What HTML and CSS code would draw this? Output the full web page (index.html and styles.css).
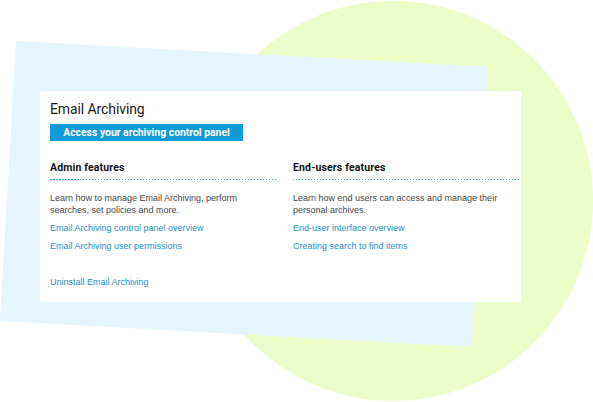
FILE: index.html
```html
<!DOCTYPE html>
<html lang="en">
<head>
<meta charset="utf-8">
<title>Email Archiving</title>
<link rel="stylesheet" href="styles.css">
</head>
<body>
<div class="stage">
  <svg class="backdrop" width="593" height="402" viewBox="0 0 593 402" aria-hidden="true">
    <circle cx="393" cy="201" r="200" fill="#ecfdc9"/>
    <polygon points="16,41 488,67 472,347 0,321" fill="#e6f5fe"/>
  </svg>
  <div class="card">
    <h1 class="title">Email Archiving</h1>
    <a class="cta" href="#">Access your archiving control panel</a>
    <div class="columns">
      <section class="col">
        <h2 class="col-head">Admin features</h2>
        <div class="dots"></div>
        <p class="desc">Learn how to manage Email Archiving, perform searches, set policies and more.</p>
        <a class="link" href="#">Email Archiving control panel overview</a>
        <a class="link" href="#">Email Archiving user permissions</a>
        <a class="link link-far" href="#">Uninstall Email Archiving</a>
      </section>
      <section class="col">
        <h2 class="col-head">End-users features</h2>
        <div class="dots"></div>
        <p class="desc">Learn how end users can access and manage their personal archives.</p>
        <a class="link" href="#">End-user interface overview</a>
        <a class="link" href="#">Creating search to find items</a>
      </section>
    </div>
  </div>
</div>
</body>
</html>
```
FILE: styles.css
```css
html, body {
  margin: 0;
  padding: 0;
  background: #ffffff;
}
.stage {
  position: relative;
  width: 593px;
  height: 402px;
  overflow: hidden;
  padding-top: 91px;
  padding-left: 40px;
  box-sizing: border-box;
}
.backdrop {
  position: absolute;
  left: 0;
  top: 0;
}
.card {
  position: relative;
  width: 481px;
  height: 211px;
  box-sizing: border-box;
  background: #ffffff;
  padding: 10px 0 0 10px;
}
.title {
  margin: 0;
  font-family: Roboto, "Liberation Sans", sans-serif;
  font-weight: 400;
  font-size: 14px;
  line-height: 16px;
  letter-spacing: -0.1px;
  color: #1a1a1a;
}
.cta {
  display: block;
  margin-top: 7px;
  width: 193px;
  height: 17px;
  background: #0e9bd9;
  color: #ffffff;
  text-decoration: none;
  text-align: center;
  font-family: Roboto, "Liberation Sans", sans-serif;
  font-weight: 700;
  font-size: 10.4px;
  line-height: 17px;
}
.columns {
  display: grid;
  grid-template-columns: 228px 228px;
  column-gap: 15px;
  margin-top: 20.5px;
}
.col {
  display: flex;
  flex-direction: column;
  align-items: flex-start;
}
.col-head {
  margin: 0;
  font-family: Roboto, "Liberation Sans", sans-serif;
  font-weight: 700;
  font-size: 10.5px;
  line-height: 12px;
  letter-spacing: 0.15px;
  color: #111111;
}
.dots {
  align-self: stretch;
  height: 1px;
  margin-top: 5.5px;
  background-image: repeating-linear-gradient(to right, #2ea3d6 0 1.5px, transparent 1.5px 3px);
}
.desc {
  margin: 11.5px 0 0;
  font-family: "Liberation Sans", Arial, sans-serif;
  font-size: 9px;
  line-height: 12.3px;
  color: #484848;
}
.link {
  margin-top: 6.2px;
  font-family: "Liberation Sans", Arial, sans-serif;
  font-size: 9px;
  line-height: 12px;
  color: #2a8fca;
  text-decoration: none;
}
.link-far {
  margin-top: 24px;
}
```
